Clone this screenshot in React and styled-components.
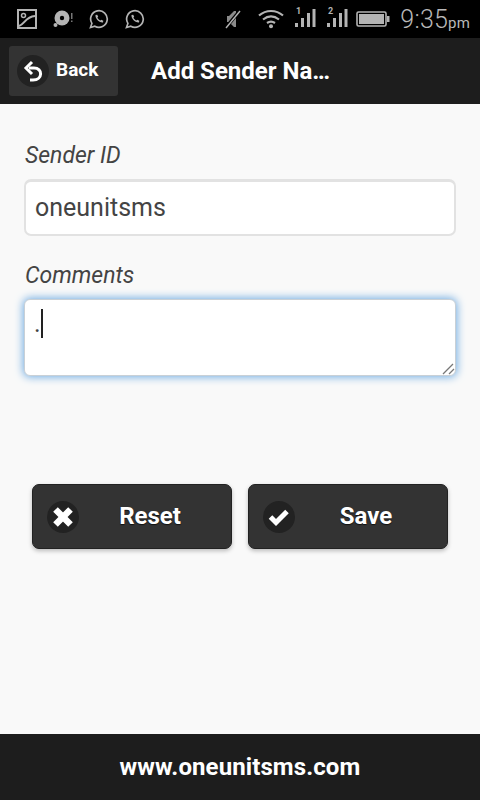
import React from "react";
import styled, { createGlobalStyle } from "styled-components";

const Global = createGlobalStyle`
  html, body { margin: 0; padding: 0; background: #f9f9f9; }
  * { box-sizing: border-box; }
  body { font-family: Roboto, "Liberation Sans", sans-serif; }
`;
const Page = styled.div`
  width: 480px; height: 800px; display: flex; flex-direction: column; overflow: hidden; background: #f9f9f9;
`;
const StatusBar = styled.div`
  height: 38px; background: #000; display: flex; align-items: center; justify-content: space-between;
  padding: 0 10px 0 17px; color: #b4b4b4; flex: none;
`;
const IconGroup = styled.div`display: flex; align-items: center; gap: ${p => p.$gap}px;`;
const MuteSlot = styled.span`display: flex; margin-right: 6px;`;
const BatterySlot = styled.span`display: flex; margin-left: -2px;`;
const Clock = styled.div`
  font-family: Roboto, sans-serif; font-size: 25px; font-weight: 300; color: #b8b8b8; letter-spacing: .2px;
  small { font-size: 15px; font-weight: 400; }
`;
const Header = styled.header`
  height: 66px; background: #1d1d1d; display: flex; align-items: center; padding: 0 9px; flex: none;
`;
const BackButton = styled.div`
  width: 109px; height: 50px; background: #333; border-radius: 3px; display: flex; align-items: center;
  padding-left: 8px; gap: 7px; color: #fff; font-weight: 700; font-size: 19px; flex: none;
`;
const BackLabel = styled.span`padding-bottom: 4px;`;
const IconDisc = styled.span`
  width: ${p => p.$size}px; height: ${p => p.$size}px; border-radius: 50%; background: #222;
  display: flex; align-items: center; justify-content: center; flex: none;
`;
const Title = styled.h1`
  margin: 0 0 0 33px; font-size: 24px; font-weight: 700; color: #fff; white-space: nowrap;
`;
const Main = styled.main`flex: 1; padding: 37px 24px 0; display: flex; flex-direction: column;`;
const Label = styled.label`
  font-style: italic; font-size: 23px; line-height: 30px; color: #444; display: block; margin: 0 0 8px 1px;
`;
const TextInput = styled.input`
  display: block; width: 432px; height: 57px; border: 2px solid #e2e2e2; border-top-width: 3px; border-radius: 7px; background: #fff;
  padding: 0 9px 2px; font: 400 25px Roboto, sans-serif; color: #444; outline: none; margin-bottom: 25px;
`;
const AreaWrap = styled.div`position: relative; width: 432px; height: 77px;`;
const TextArea = styled.textarea`
  display: block; width: 432px; height: 77px; border: 1.5px solid #c9d0d6; border-radius: 6px; background: #fff;
  padding: 8px 9px; font: 400 25px/32px Roboto, sans-serif; color: #444; outline: none; resize: none;
  box-shadow: 0 0 8px 1px #6fabe2;
`;
const Caret = styled.span`
  position: absolute; left: 17px; top: 10px; width: 1.5px; height: 29px; background: #222;
`;
const Grip = styled.svg`position: absolute; right: 1px; bottom: 1px;`;
const Buttons = styled.div`display: flex; gap: 16px; padding: 0 8px; margin-top: 108px;`;
const ActionButton = styled.div`
  width: 200px; height: 65px; background: #333; border: 1px solid #222; border-radius: 7px;
  display: flex; align-items: center; padding-left: 14px;
  box-shadow: 0 2px 4px rgba(0,0,0,.25);
`;
const ActionLabel = styled.span`
  flex: 1; text-align: center; color: #fff; font-weight: 700; font-size: 24px;
  padding: 0 10px 2px 0; text-shadow: 0 1px 1px #111;
`;
const Footer = styled.footer`
  height: 66px; background: #1d1d1d; color: #fff; font-weight: 700; font-size: 24px; letter-spacing: .1px; flex: none;
  display: flex; align-items: center; justify-content: center;
`;

const Stroke = { fill: "none", stroke: "#b4b4b4" };

const PhotoIcon = () => (
  <svg width="20" height="20" viewBox="0 0 20 20" {...Stroke} strokeWidth="2">
    <rect x="1" y="1" width="18" height="18" />
    <circle cx="6.5" cy="6.5" r="2" strokeWidth="1.5" />
    <path d="M2 17 C8 15 8 8 18 7" />
  </svg>
);
const DiscIcon = () => (
  <svg width="20" height="20" viewBox="0 0 20 20">
    <circle cx="9" cy="9" r="7.5" fill="#b4b4b4" />
    <circle cx="9" cy="9" r="2.2" fill="#000" />
    <circle cx="2.5" cy="16" r="2" fill="#b4b4b4" />
    <rect x="18" y="4" width="1.5" height="6" fill="#777" />
    <rect x="18" y="11.5" width="1.5" height="1.5" fill="#777" />
  </svg>
);
const WhatsIcon = () => (
  <svg width="20" height="20" viewBox="0 0 20 20" {...Stroke} strokeWidth="1.7">
    <path d="M1.5 18.5 L2.9 14.4 A8.3 8.3 0 1 1 5.8 17.2 Z" />
    <path d="M6.5 6 C6 9.5 10 13.8 14 13.5 L14.3 11.8 L12.3 10.8 L11.4 11.6 C10 11 9 10 8.4 8.6 L9.2 7.7 L8.2 5.7 Z" fill="#b4b4b4" stroke="none" />
  </svg>
);
const MuteIcon = () => (
  <svg width="17" height="20" viewBox="0 0 17 20">
    <path d="M4 7 L9 2 L11 2 L11 18 L9 18 L4 13 L2 13 L2 7 Z" fill="#8a8a8a" />
    <path d="M1 18.5 L15 1.5" stroke="#000" strokeWidth="3.4" />
    <path d="M1 19 L15 2" stroke="#b4b4b4" strokeWidth="1.4" />
  </svg>
);
const WifiIcon = () => (
  <svg width="26" height="20" viewBox="0 0 26 20" {...Stroke} strokeWidth="2.2">
    <path d="M1 6.5 C8 0.5 18 0.5 25 6.5" />
    <path d="M5 10.5 C10 6.5 16 6.5 21 10.5" />
    <path d="M9 14 C11.5 12.3 14.5 12.3 17 14" />
    <circle cx="13" cy="17.3" r="2" fill="#b4b4b4" stroke="none" />
  </svg>
);
const SignalIcon = ({ n }) => (
  <svg width="22" height="30" viewBox="0 -4 22 30">
    <text x="2" y="6" fontFamily="Roboto, sans-serif" fontSize="9" fontWeight="700" fill="#b4b4b4">{n}</text>
    <rect x="1" y="15" width="3" height="4" fill="#b4b4b4" />
    <rect x="7" y="10" width="3" height="9" fill="#b4b4b4" />
    <rect x="13" y="5" width="3" height="14" fill="#b4b4b4" />
    <rect x="18.5" y="1" width="3" height="18" fill="#b4b4b4" />
  </svg>
);
const BatteryIcon = () => (
  <svg width="34" height="18" viewBox="0 0 34 18">
    <rect x="1" y="2" width="29" height="14" rx="1.5" fill="none" stroke="#b4b4b4" strokeWidth="1.6" />
    <rect x="3" y="4" width="25" height="10" fill="#b4b4b4" />
    <rect x="31" y="6" width="2.5" height="6" fill="#b4b4b4" />
  </svg>
);
const BackIcon = () => (
  <svg width="22" height="24" viewBox="0 0 22 24" fill="none" stroke="#fff" strokeWidth="3">
    <path d="M7 9 H12 C21 9 21 21 11 21 H8" />
    <path d="M10 3 L4 9 L10 15" strokeLinejoin="miter" />
  </svg>
);
const CrossIcon = () => (
  <svg width="22" height="22" viewBox="0 0 22 22" stroke="#fff" strokeWidth="6.5">
    <path d="M3.5 3.5 L18.5 18.5 M18.5 3.5 L3.5 18.5" />
  </svg>
);
const CheckIcon = () => (
  <svg width="22" height="20" viewBox="0 0 22 20" fill="none" stroke="#fff" strokeWidth="5">
    <path d="M2.5 10 L8 15.5 L19 4.5" />
  </svg>
);

export default function App() {
  return (
    <Page>
      <Global />
      <StatusBar>
        <IconGroup $gap={16}>
          <PhotoIcon /><DiscIcon /><WhatsIcon /><WhatsIcon />
        </IconGroup>
        <IconGroup $gap={10}>
          <MuteSlot><MuteIcon /></MuteSlot><WifiIcon /><SignalIcon n="1" /><SignalIcon n="2" /><BatterySlot><BatteryIcon /></BatterySlot>
          <Clock>9:35<small>pm</small></Clock>
        </IconGroup>
      </StatusBar>
      <Header>
        <BackButton><IconDisc $size={32}><BackIcon /></IconDisc><BackLabel>Back</BackLabel></BackButton>
        <Title>Add Sender Na…</Title>
      </Header>
      <Main>
        <Label>Sender ID</Label>
        <TextInput readOnly value="oneunitsms" />
        <Label>Comments</Label>
        <AreaWrap>
          <TextArea readOnly value="." />
          <Caret />
          <Grip width="14" height="14" viewBox="0 0 14 14" stroke="#777" strokeWidth="1.3">
            <path d="M2 13 L12 3 M8 13 L13 8" />
          </Grip>
        </AreaWrap>
        <Buttons>
          <ActionButton><IconDisc $size={32}><CrossIcon /></IconDisc><ActionLabel>Reset</ActionLabel></ActionButton>
          <ActionButton><IconDisc $size={32}><CheckIcon /></IconDisc><ActionLabel>Save</ActionLabel></ActionButton>
        </Buttons>
      </Main>
      <Footer>www.oneunitsms.com</Footer>
    </Page>
  );
}
